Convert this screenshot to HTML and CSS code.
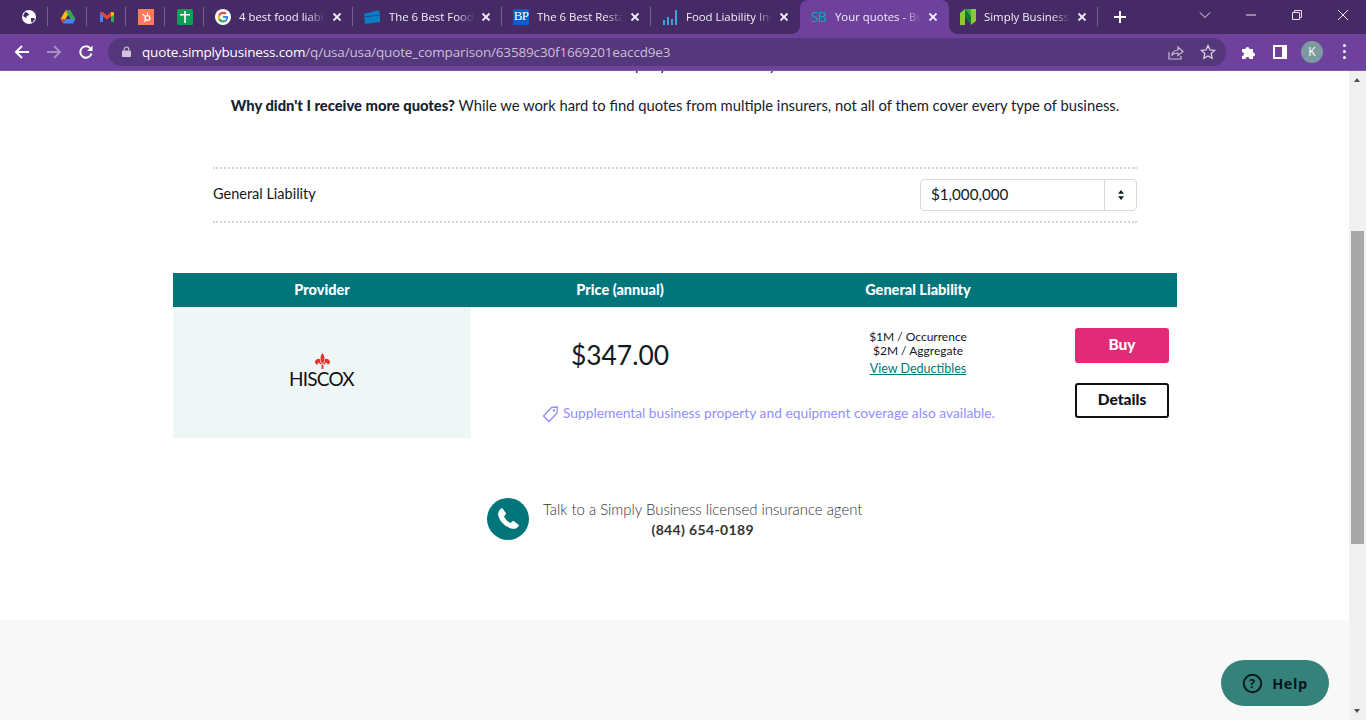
FILE: index.html
```html
<!DOCTYPE html>
<html lang="en">
<head>
<meta charset="utf-8">
<title>Your quotes - Business Insurance</title>
<link rel="stylesheet" href="styles.css">
</head>
<body>
<header class="chrome">
  <div class="tabstrip">
    <div class="pinned"><svg class="fav" viewBox="0 0 16 16"><circle cx="8" cy="8" r="7" fill="#fff"/><path d="M4 3l3 1 1 2-2 1-1 2-3-2zM10 9l3 0 1 1-3 4-1-2z" fill="#46296a"/></svg></div>
    <div class="pinned"><svg class="fav" viewBox="0 0 16 16"><path d="M5.500 1.500h5l-5 8.500H.5z" fill="#f9bc15"/><path d="M10.500 1.500L15.500 10h-5L5.500 1.500z" fill="#34a853"/><path d="M3 14.500L5.500 10h10L13 14.500z" fill="#4285f4"/><path d="M.5 10h5L3 14.500z" fill="#ea4335"/></svg></div>
    <div class="pinned"><svg class="fav" viewBox="0 0 16 16"><path d="M1 3.500V13h3V7.500L8 10.500l4-3V13h3V3.500L12 3 8 6.500 4 3z" fill="#ea4335"/><path d="M1 4v9h3V6.500z" fill="#4285f4"/><path d="M12 6.500V13h3V4z" fill="#34a853"/><path d="M12 3l3 .5V6l-3 1.500z" fill="#fbbc05"/></svg></div>
    <div class="pinned"><svg class="fav" viewBox="0 0 16 16"><rect width="16" height="16" fill="#ff7a59"/><circle cx="9.500" cy="9" r="2.400" fill="none" stroke="#fff" stroke-width="1.300"/><path d="M9.500 6.500V3.500M8 8L4.500 5M8 10.800l-2 2" stroke="#fff" stroke-width="1.100"/></svg></div>
    <div class="pinned"><svg class="fav" viewBox="0 0 16 16"><rect width="16" height="16" rx="1.500" fill="#0f9d58"/><path d="M7.200 2h1.600v3h4.200v1.600H8.800V14H7.200V6.600H3V5h4.200z" fill="#fff"/></svg></div>
    <div class="tab"><svg class="fav" viewBox="0 0 16 16"><circle cx="8" cy="8" r="8" fill="#fff"/><path d="M13.200 8.100c0-.4 0-.8-.1-1.100H8v2.100h3a2.500 2.500 0 0 1-1.100 1.700l1.700 1.300a5.200 5.200 0 0 0 1.600-4z" fill="#4285f4"/><path d="M8 13.400c1.500 0 2.700-.5 3.600-1.300L9.900 10.800a3.200 3.200 0 0 1-4.800-1.700L3.300 10.400A5.400 5.400 0 0 0 8 13.400z" fill="#34a853"/><path d="M5.100 9.100a3.200 3.200 0 0 1 0-2.100L3.300 5.600a5.400 5.400 0 0 0 0 4.800z" fill="#fbbc05"/><path d="M8 4.800c.8 0 1.500.3 2.100.8l1.500-1.500A5.400 5.400 0 0 0 3.300 5.600L5.100 7A3.200 3.200 0 0 1 8 4.800z" fill="#ea4335"/></svg><span class="title">4 best food liability</span><svg class="x" viewBox="0 0 10 10"><path d="M1.500 1.500l7 7M8.500 1.500l-7 7"/></svg></div>
    <div class="tab"><svg class="fav wide" viewBox="0 0 18 16"><path d="M1 5l15-4 1 4v8L2 15z" fill="#0d7cc4"/><path d="M1 8l16-2" stroke="#07558c" stroke-width="1"/></svg><span class="title">The 6 Best Food Liability</span><svg class="x" viewBox="0 0 10 10"><path d="M1.500 1.500l7 7M8.500 1.500l-7 7"/></svg></div>
    <div class="tab"><span class="bp">BP</span><span class="title">The 6 Best Restaurant</span><svg class="x" viewBox="0 0 10 10"><path d="M1.500 1.500l7 7M8.500 1.500l-7 7"/></svg></div>
    <div class="tab before-active"><svg class="fav" viewBox="0 0 16 16"><path d="M1 11h2v5H1zM5 8h2v8H5zM9 10h2v6H9zM13 1h2v15h-2z" fill="#3aa7dc"/></svg><span class="title">Food Liability Insurance</span><svg class="x" viewBox="0 0 10 10"><path d="M1.500 1.500l7 7M8.500 1.500l-7 7"/></svg></div>
    <div class="tab active"><span class="sb">SB</span><span class="title">Your quotes - Business</span><svg class="x" viewBox="0 0 10 10"><path d="M1.500 1.500l7 7M8.500 1.500l-7 7"/></svg></div>
    <div class="tab"><svg class="fav" viewBox="0 0 16 16"><path d="M0 4l5-4v16H0z" fill="#8dc63f"/><path d="M11 0h5v12l-5 4z" fill="#8dc63f"/><path d="M5 0l6 8v8L5 8z" fill="#0a7a35"/><path d="M5 0h6v8z" fill="#39a935"/></svg><span class="title">Simply Business - Small</span><svg class="x" viewBox="0 0 10 10"><path d="M1.500 1.500l7 7M8.500 1.500l-7 7"/></svg></div>
    <svg class="plus" viewBox="0 0 12 12"><path d="M6 0v12M0 6h12"/></svg>
    <div class="winctl">
      <svg class="wi" viewBox="0 0 12 12"><path d="M1 3.500l5 5 5-5"/></svg>
      <svg class="wi" viewBox="0 0 12 12"><path d="M1 6h10"/></svg>
      <svg class="wi" viewBox="0 0 12 12"><path d="M1.500 3.500h7v7h-7zM3.500 3.500v-2h7v7h-2"/></svg>
      <svg class="wi" viewBox="0 0 12 12"><path d="M1 1l10 10M11 1L1 11"/></svg>
    </div>
  </div>
  <div class="toolbar">
    <svg class="nav" viewBox="0 0 16 16"><path d="M15 8H2M8 2L2 8l6 6" fill="none" stroke="#fff" stroke-width="2"/></svg>
    <svg class="nav" viewBox="0 0 16 16"><path d="M1 8h13M8 2l6 6-6 6" fill="none" stroke="#a78fc4" stroke-width="2"/></svg>
    <svg class="nav" viewBox="0 0 16 16"><path d="M13.500 9.500A5.700 5.700 0 1 1 12 4" fill="none" stroke="#fff" stroke-width="2"/><path d="M14.500 1.500v5.500H9z" fill="#fff"/></svg>
    <div class="omnibox">
      <svg class="lock" viewBox="0 0 10 12"><path d="M2.500 5V3.500a2.500 2.500 0 0 1 5 0V5" fill="none" stroke="#cfc6da" stroke-width="1.200"/><rect y="5" width="10" height="7" rx="1" fill="#cfc6da"/></svg>
      <span class="url"><b>quote.simplybusiness.com</b>/q/usa/usa/quote_comparison/63589c30f1669201eaccd9e3</span>
      <svg class="share" viewBox="0 0 16 16"><path d="M1 8v7h12v-3" fill="none" stroke="#c7bdd4" stroke-width="1.200"/><path d="M4 11c0-3 3-5 6-5V3l5 4.500L10 11.500V9c-2.500 0-4.500.5-6 2z" fill="none" stroke="#c7bdd4" stroke-width="1.200"/></svg>
      <svg class="star" viewBox="0 0 16 16"><path d="M8 1.500l2 4.400 4.700.5-3.500 3.200 1 4.700L8 11.900l-4.200 2.400 1-4.700L1.300 6.400 6 5.900z" fill="none" stroke="#d8d0e2" stroke-width="1.300"/></svg>
    </div>
    <div class="tools">
      <svg class="puzzle" viewBox="0 0 16 16"><path d="M1 5h3.500a2 2 0 1 1 4 0H12v3.500a2 2 0 1 1 0 4V15H8.500a2 2 0 1 0-4 0H1v-3a2 2 0 1 0 0-4z" fill="#fff"/></svg>
      <span class="sidepanel"></span>
      <span class="avatar">K</span>
      <span class="kebab"><i></i><i></i><i></i></span>
    </div>
  </div>
</header>

<div class="viewport">
  <div class="page">
    <main class="main">
      <p class="clipped"><span class="d1">p</span><span class="d2">y</span><span class="d3">y</span></p>
      <p class="why"><strong>Why didn't I receive more quotes?</strong> While we work hard to find quotes from multiple insurers, not all of them cover every type of business.</p>
      <div class="limit">
        <span class="label">General Liability</span>
        <div class="select"><span class="val">$1,000,000</span><span class="caret"><svg viewBox="0 0 6 10"><path d="M3 0l3 3.800H0zM3 10L0 6.200h6z"/></svg></span></div>
      </div>
      <section class="table">
        <div class="thead">
          <div class="c1">Provider</div><div class="c2">Price (annual)</div><div class="c3">General Liability</div><div class="c4"></div>
        </div>
        <div class="trow">
          <div class="provider">
            <div class="logo">
              <svg viewBox="0 0 16 18" class="lily"><path d="M8 0c1.500 2.500 2.500 4 2 7-.3 1.500-1 2.500-1.200 4h-1.600C7 9.500 6.300 8.500 6 7 5.500 4 6.500 2.500 8 0zM4 6c1.500 0 2 1.500 1.500 3.500L7 11v1H5.500C5 10.500 4 10 3 10.500 2.500 11 3 12 4 12c-2 1-4-.5-4-2.500C0 7.500 2 6 4 6zM12 6c2 0 4 1.500 4 3.500S14 13 12 12c1 0 1.500-1 1-1.500-1-.5-2 0-2.500 1.500H9v-1l1.500-1.500C10 7.500 10.500 6 12 6zM7 12.500h2V17H7z" fill="#e3342a"/></svg>
              <span class="wordmark">HISCOX</span>
            </div>
          </div>
          <div class="details">
            <div class="figures">
              <div class="price">$347.00</div>
              <div class="cover"><div>$1M / Occurrence</div><div>$2M / Aggregate</div><a href="#">View Deductibles</a></div>
            </div>
            <div class="note"><svg viewBox="0 0 17 17"><path d="M9.500 1.500l6-.5-.5 6-8 8.500L1.500 10z" fill="none" stroke="#8f8fff" stroke-width="1.300" stroke-linejoin="round"/><circle cx="12" cy="4.500" r="1.200" fill="#8f8fff"/></svg>Supplemental business property and equipment coverage also available.</div>
          </div>
          <div class="actions">
            <a class="btn buy" href="#">Buy</a>
            <a class="btn outline" href="#">Details</a>
          </div>
        </div>
      </section>
      <div class="agent">
        <span class="phone"><svg viewBox="0 0 24 24"><path d="M6.600 1.500L9.800 6c.4.600.3 1.300-.2 1.800L8 9.400c1.200 2.700 3.400 5 6.500 6.700l1.600-1.600c.5-.5 1.300-.6 1.900-.2l4.300 3.100c.6.500.7 1.300.2 1.900-1.600 2-3.800 3-6 2.400C9.500 20.300 3.700 14.500 2.300 8.500 1.700 6.200 2.800 3.600 4.700 1.700c.5-.6 1.400-.6 1.900-.2z" fill="#fff"/></svg></span>
        <div class="agent-text"><div>Talk to a Simply Business licensed insurance agent</div><strong>(844) 654-0189</strong></div>
      </div>
    </main>
    <footer class="foot"></footer>
    <button class="help"><svg viewBox="0 0 24 24"><circle cx="12" cy="12" r="10" fill="none" stroke="#08151c" stroke-width="2.200"/><text x="12" y="17" text-anchor="middle" class="q">?</text></svg><span>Help</span></button>
  </div>
  <aside class="scrollbar"><span class="up"></span><span class="track"><span class="thumb"></span></span><span class="down"></span></aside>
</div>
</body>
</html>
```

FILE: styles.css
```css
* { box-sizing: border-box; }
html, body { margin: 0; height: 720px; overflow: hidden; }
body { font-family: "Lato", "Liberation Sans", sans-serif; color: #111a22; background: #fff; }
.chrome { height: 71px; background: #6d419c; }
.tabstrip { height: 34px; background: #452a66; display: flex; align-items: center; padding-left: 9px; position: relative; }
.pinned { width: 39px; height: 34px; display: flex; align-items: center; justify-content: center; position: relative; flex: none; }
.pinned::after, .tab::after { content: ""; position: absolute; right: 0; top: 7px; height: 19px; width: 1px; background: #75608f; }
.fav { width: 16px; height: 16px; flex: none; }
.fav.wide { width: 18px; margin-left: -1px; }
.tab { width: 149px; height: 34px; flex: none; display: flex; align-items: center; padding: 0 9px 0 11px; position: relative; color: #f3eff8; font-family: "Open Sans", sans-serif; font-size: 11.400px; }
.title { flex: 1; margin: 0 0 1px 8px; white-space: nowrap; overflow: hidden; -webkit-mask-image: linear-gradient(90deg, #000 78%, transparent 98%); mask-image: linear-gradient(90deg, #000 78%, transparent 98%); }
.x { width: 10px; height: 10px; flex: none; margin-left: 5px; margin-right: 2px; fill: none; stroke: #f3eff8; stroke-width: 1.800; }
.before-active::after { display: none; }
.tab.active { background: #6d419c; border-radius: 8px 8px 0 0; z-index: 1; }
.tab.active::before { content: ""; position: absolute; left: -8px; bottom: 0; width: 8px; height: 8px; background: radial-gradient(circle at 0 0, transparent 7.500px, #6d419c 8px); }
.tab.active::after { top: auto; right: -8px; bottom: 0; width: 8px; height: 8px; background: radial-gradient(circle at 100% 0, transparent 7.500px, #6d419c 8px); }
.bp { width: 16px; height: 16px; flex: none; background: #0b5bd3; color: #fff; font: 400 13px/14px "Liberation Serif", serif; letter-spacing: -0.800px; text-align: center; overflow: hidden; }
.sb { width: 16px; flex: none; color: #1aa2b0; font: 400 14px/16px "Open Sans", sans-serif; letter-spacing: -1px; overflow: hidden; }
.plus { width: 12px; height: 12px; margin-left: 16px; fill: none; stroke: #fff; stroke-width: 2; flex: none; }
.winctl { margin-left: auto; display: flex; }
.wi { width: 12px; height: 12px; margin: -5px 17px 0; fill: none; stroke: #e8e3ee; stroke-width: 1; flex: none; }
.toolbar { height: 37px; display: flex; align-items: center; padding: 3px 0 4px 14px; border-bottom: 1px solid #7f57ad; }
.nav { width: 16px; height: 16px; flex: none; margin-right: 16px; }
.omnibox { flex: none; width: 1118px; margin-left: -2px; height: 28px; border-radius: 14px; background: #55377c; display: flex; align-items: center; padding-left: 14px; }
.lock { width: 9px; height: 11px; flex: none; }
.url { margin-left: 11px; font-family: "Open Sans", sans-serif; font-size: 13.500px; color: #c9bfd7; white-space: nowrap; letter-spacing: -0.16px; }
.url b { font-weight: 400; color: #fff; }
.share { width: 16px; height: 16px; margin-left: auto; flex: none; }
.star { width: 16px; height: 16px; margin: 0 10px 0 16px; flex: none; }
.tools { display: flex; align-items: center; margin-left: 14px; }
.puzzle { width: 16px; height: 16px; flex: none; margin-left: 1px; margin-right: -1px; }
.sidepanel { width: 14px; height: 14px; border: 2px solid #fff; border-right-width: 5px; margin-left: 17px; flex: none; }
.avatar { width: 22px; height: 22px; margin-left: 14px; border-radius: 50%; background: #7d9a9f; color: #fff; font: 400 12px/22px "Open Sans", sans-serif; text-align: center; flex: none; }
.kebab { display: flex; flex-direction: column; gap: 3px; margin-left: 20px; }
.kebab i { width: 3px; height: 3px; border-radius: 50%; background: #fff; display: block; }

.viewport { height: 649px; display: flex; overflow: hidden; }
.page { width: 1349px; flex: none; display: flex; flex-direction: column; position: relative; }
.main { height: 549px; background: #fff; padding: 0 172px 0 173px; overflow: hidden; }
.clipped { margin: -17px 0 0; height: 20px; font-size: 14.700px; line-height: 20px; color: #111a22; display: flex; }
.d1 { margin-left: 462px; }
.d2 { margin-left: 16px; }
.d3 { margin-left: 102px; }
.why { margin: 21px 0 0; font-size: 14.750px; line-height: 20px; text-align: center; color: #16222c; }
.why strong { font-weight: 900; }
.limit { margin: 52px 40px 0; height: 56px; border-top: 2px dotted #d5d5d5; border-bottom: 2px dotted #d5d5d5; display: flex; align-items: center; justify-content: space-between; font-size: 14.500px; }
.label { margin-bottom: 3px; }
.select { width: 217px; height: 32px; border: 1px solid #d9d9d9; border-radius: 4px; display: flex; align-items: center; font-size: 15.200px; }
.val { flex: 1; padding-left: 10px; margin-bottom: 3px; }
.caret { width: 32px; height: 30px; border-left: 1px solid #d9d9d9; display: flex; align-items: center; justify-content: center; }
.caret svg { width: 6px; height: 10px; fill: #111a22; }
.table { margin-top: 50px; }
.thead { height: 34px; background: #00757a; display: flex; align-items: center; color: #fff; font-size: 14.500px; font-weight: 900; text-align: center; padding-bottom: 1px; }
.c1 { width: 298px; } .c2 { width: 298px; } .c3 { width: 298px; } .c4 { flex: 1; }
.trow { display: flex; height: 131px; }
.provider { width: 298px; background: #eff7f6; display: flex; align-items: center; justify-content: center; flex: none; }
.logo { display: flex; flex-direction: column; align-items: center; margin-top: -6px; }
.lily { width: 15px; height: 17px; }
.wordmark { font: 400 19px/17px "Lato", sans-serif; color: #111; letter-spacing: -0.800px; margin-left: -1px; }
.details { width: 596px; flex: none; }
.figures { display: flex; align-items: flex-start; height: 69px; }
.price { width: 298px; text-align: center; font-size: 26.400px; line-height: 34px; margin-top: 31px; color: #111a22; }
.cover { width: 298px; text-align: center; font-size: 12px; line-height: 14px; margin-top: 23px; }
.cover a { color: #00757a; display: block; line-height: 17px; font-size: 12.500px; margin-top: 2px; }
.note { margin-top: 27px; margin-left: 71px; font-size: 13.800px; line-height: 18px; color: #8f8fff; display: flex; align-items: center; gap: 4px; white-space: nowrap; }
.note svg { width: 17px; height: 17px; margin-top: 3px; flex: none; }
.actions { flex: 1; display: flex; flex-direction: column; align-items: flex-end; gap: 20px; padding: 21px 8px 0 0; }
.btn { width: 94px; height: 35px; border-radius: 3px; display: block; text-align: center; text-decoration: none; font-size: 15.500px; font-weight: 900; line-height: 28px; border: 2px solid #111; color: #111; }
.btn.buy { background: #e22a76; border-color: #e22a76; color: #fff; line-height: 29px; }
.agent { margin: 60px 0 0 314px; display: flex; align-items: center; gap: 14px; color: #333; font-size: 14.900px; font-weight: 300; }
.phone { width: 42px; height: 42px; border-radius: 50%; background: #00757a; display: flex; align-items: center; justify-content: center; flex: none; }
.phone svg { width: 24px; height: 24px; }
.agent-text { text-align: center; line-height: 21px; }
.agent-text strong { display: block; line-height: 20px; font-weight: 700; font-size: 14px; letter-spacing: .350px; }
.foot { flex: 1; background: #f8f8f8; }
.help { position: absolute; left: 1221px; top: 589px; width: 108px; height: 46px; border: 0; border-radius: 23px; background: #34827a; color: #08151c; display: flex; align-items: center; justify-content: center; gap: 9px; font: 700 14.500px "Open Sans", sans-serif; letter-spacing: .6px; padding: 0; }
.help svg { width: 21px; height: 21px; }
.q { font: 700 14px "Open Sans", sans-serif; fill: #08151c; }
.scrollbar { flex: 1; background: #f1f1f1; display: flex; flex-direction: column; }
.up, .down { height: 17px; flex: none; position: relative; }
.up::after, .down::after { content: ""; position: absolute; left: 5px; width: 0; height: 0; border-left: 3.500px solid transparent; border-right: 3.500px solid transparent; }
.up::after { top: 7px; border-bottom: 4px solid #505050; }
.down::after { top: 6px; border-top: 4px solid #505050; }
.track { flex: 1; padding: 143px 2px 0; display: block; }
.thumb { display: block; height: 313px; background: #a8a8a8; }
```
